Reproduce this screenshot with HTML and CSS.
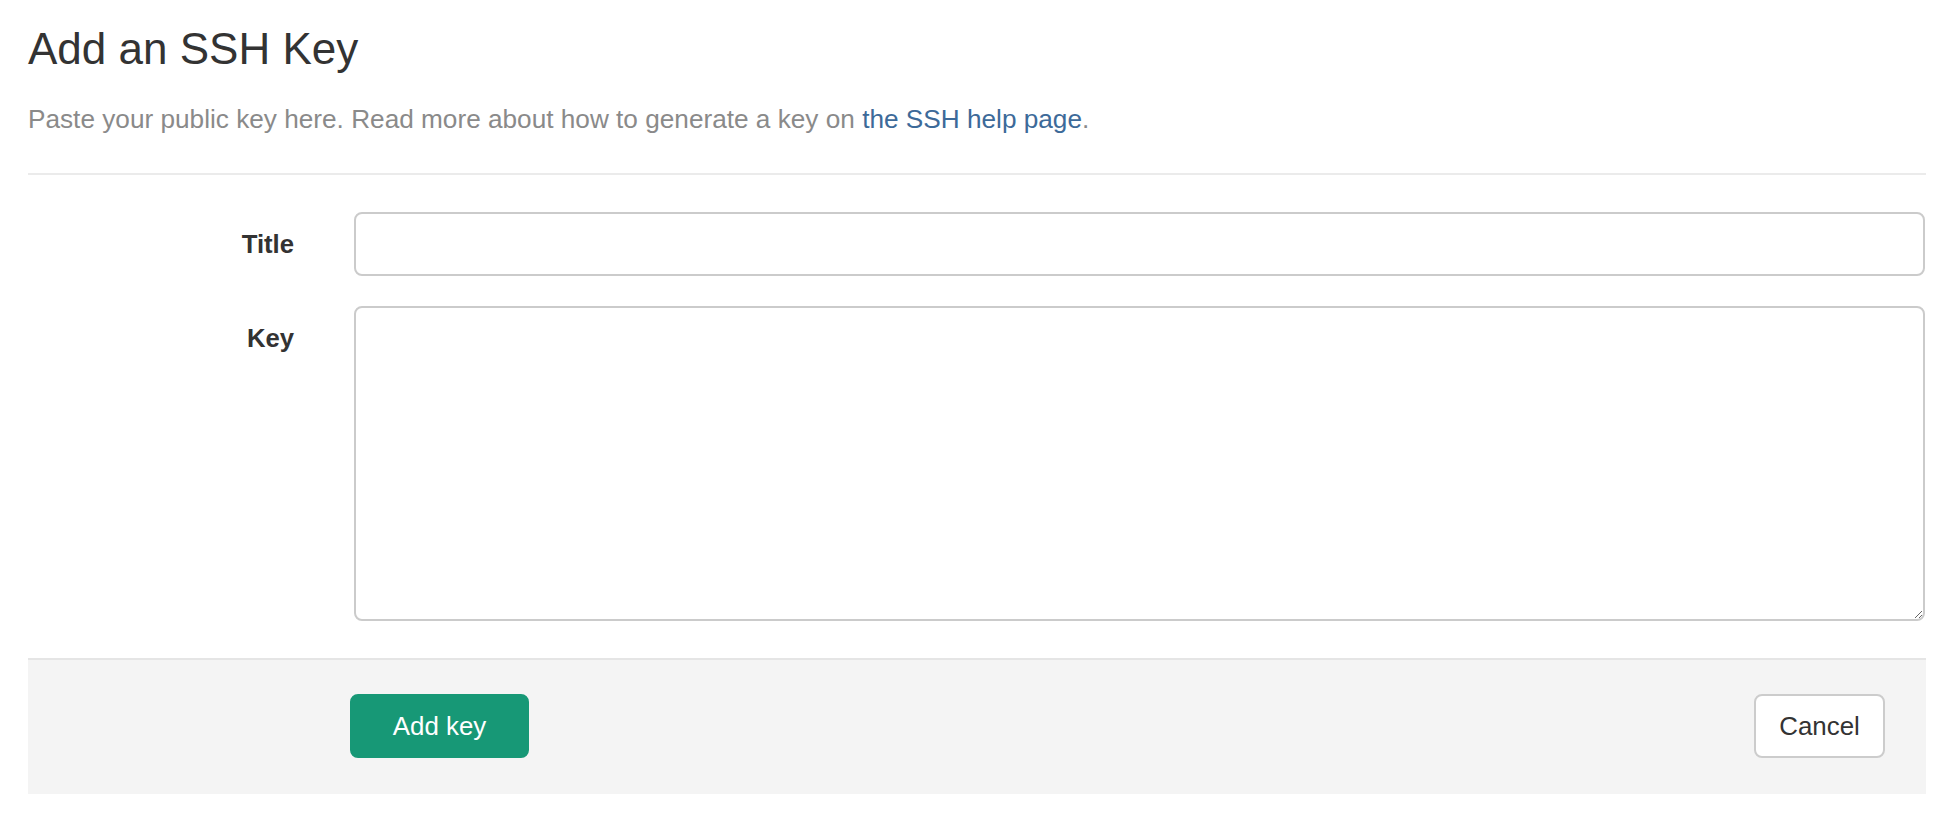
FILE: index.html
```html
<!DOCTYPE html>
<html lang="en">
<head>
<meta charset="utf-8">
<title>Add an SSH Key</title>
<link rel="stylesheet" href="styles.css">
</head>
<body>
<div class="page">
  <h3 class="page-title">Add an SSH Key</h3>
  <p class="lead">Paste your public key here. Read more about how to generate a key on <a href="#">the SSH help page</a>.</p>
  <hr class="divider">
  <form class="key-form">
    <div class="form-row">
      <label class="form-label" for="key_title">Title</label>
      <input class="form-input" id="key_title" type="text">
    </div>
    <div class="form-row">
      <label class="form-label" for="key_key">Key</label>
      <textarea class="form-input form-textarea" id="key_key"></textarea>
    </div>
    <div class="form-actions">
      <button type="button" class="btn btn-create">Add key</button>
      <button type="button" class="btn btn-cancel">Cancel</button>
    </div>
  </form>
</div>
</body>
</html>
```

FILE: styles.css
```css
html, body {
  margin: 0;
  padding: 0;
  background: #ffffff;
}

body {
  font-family: "Liberation Sans", Arial, Helvetica, sans-serif;
  font-size: 25.7px;
  line-height: 36.7px;
  color: #333333;
}

.page {
  margin-left: 28px;
  width: 1898px;
}

.page-title {
  margin: 0;
  padding-top: 25px;
  font-size: 44px;
  line-height: 48px;
  font-weight: 400;
  color: #333333;
}

.lead {
  margin: 28px 0 0;
  font-size: 26.2px;
  color: #8a8a8a;
}

.lead a {
  color: #3d6a99;
  text-decoration: none;
}

.divider {
  margin: 35px 0 0;
  border: 0;
  border-top: 2px solid #ebebeb;
  height: 0;
}

.key-form {
  padding-top: 37px;
}

.form-row {
  display: grid;
  grid-template-columns: 266px 1fr;
  column-gap: 60px;
  margin-bottom: 30px;
}

.form-label {
  text-align: right;
  font-weight: 700;
  padding-top: 14px;
  color: #333333;
}

.form-input {
  box-sizing: border-box;
  display: block;
  width: 1571px;
  height: 64px;
  margin: 0;
  padding: 10px 18px;
  border: 2px solid #cbcbcb;
  border-radius: 8px;
  background: #ffffff;
  font: inherit;
  color: #333333;
  outline: none;
}

.form-textarea {
  height: 315px;
  resize: vertical;
}

.form-row:last-of-type {
  margin-bottom: 0;
}

.form-actions {
  margin-top: 37.5px;
  border-top: 2px solid #e5e5e5;
  background: #f4f4f4;
  padding: 34px 41px 36px 322px;
  display: flex;
  justify-content: space-between;
  align-items: center;
}

.btn {
  box-sizing: border-box;
  height: 64px;
  border-radius: 8px;
  border: 2px solid transparent;
  font-family: "Liberation Sans", Arial, Helvetica, sans-serif;
  font-size: 25.9px;
  line-height: 60px;
  margin: 0;
  cursor: pointer;
}

.btn-create {
  width: 179px;
  padding: 0;
  background: #179876;
  border-color: #179876;
  color: #ffffff;
}

.btn-cancel {
  width: 131px;
  padding: 0;
  background: #ffffff;
  border-color: #cccccc;
  color: #333333;
}
```
